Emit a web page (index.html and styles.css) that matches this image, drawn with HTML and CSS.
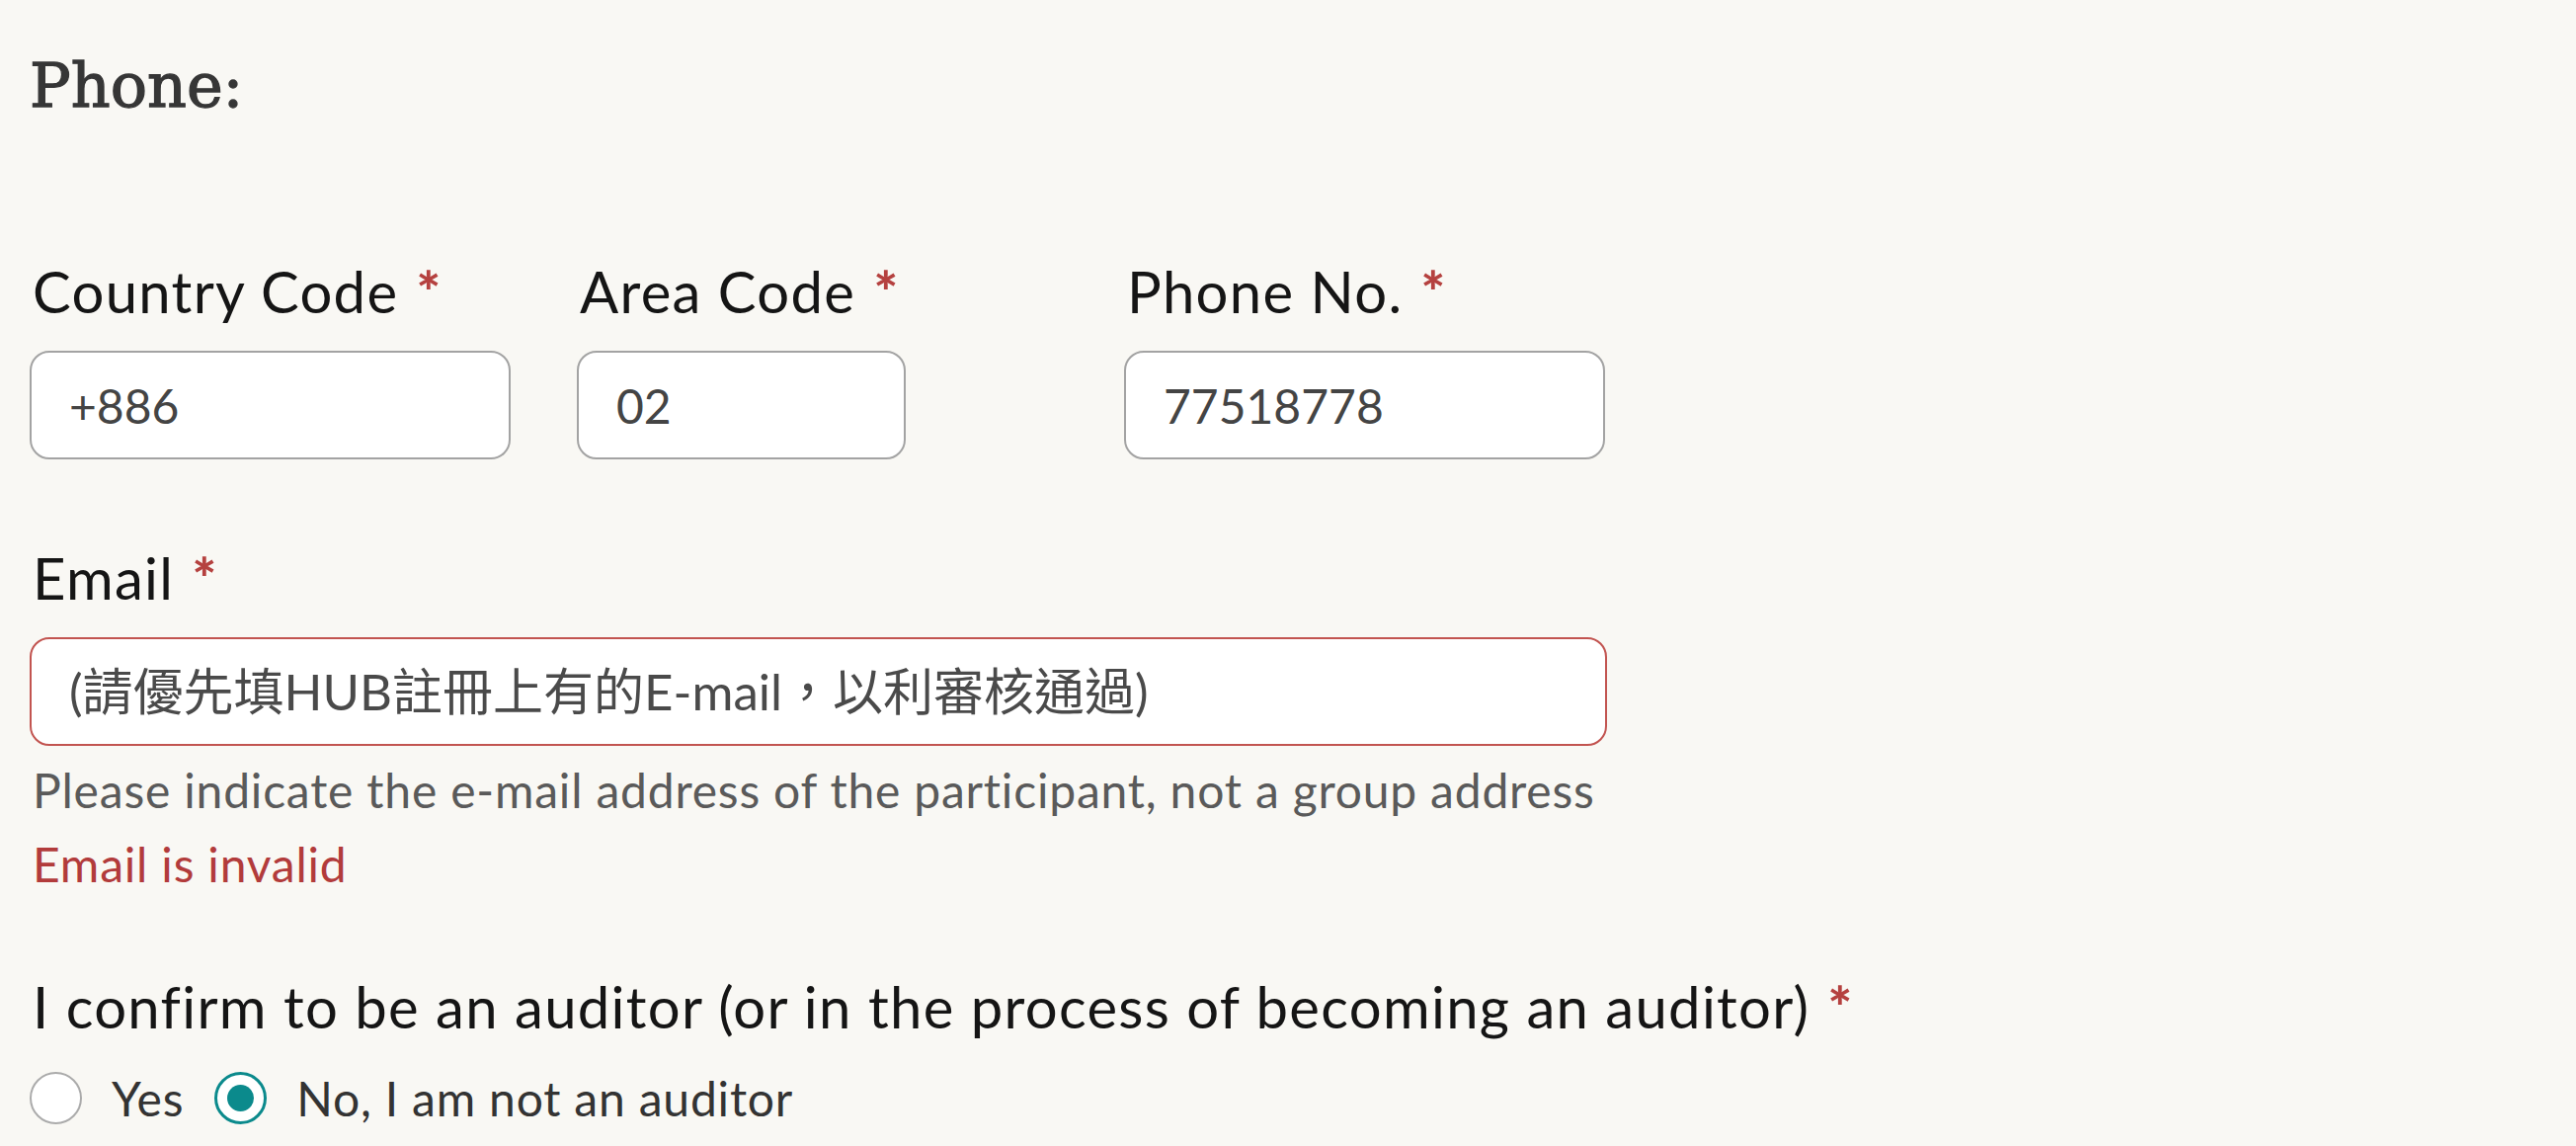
FILE: index.html
```html
<!DOCTYPE html>
<html lang="en">
<head>
<meta charset="utf-8">
<title>Phone</title>
<link rel="stylesheet" href="styles.css">
</head>
<body>
<form class="form">
  <h3 class="section-title">Phone:</h3>

  <div class="phone-grid">
    <div class="field">
      <label class="field-label" for="cc">Country Code <span class="req">*</span></label>
      <input class="text-input" id="cc" type="text" value="+886">
    </div>
    <div class="field">
      <label class="field-label" for="ac">Area Code <span class="req">*</span></label>
      <input class="text-input narrow" id="ac" type="text" value="02">
    </div>
    <div class="field">
      <label class="field-label" for="pn">Phone No. <span class="req">*</span></label>
      <input class="text-input" id="pn" type="text" value="77518778">
    </div>
  </div>

  <div class="field email-field">
    <label class="field-label" for="em">Email <span class="req">*</span></label>
    <input class="text-input wide invalid" id="em" type="text" placeholder="(請優先填HUB註冊上有的E-mail，以利審核通過)">
    <p class="help">Please indicate the e-mail address of the participant, not a group address</p>
    <p class="help error">Email is invalid</p>
  </div>

  <div class="field confirm-field">
    <p class="field-label confirm">I confirm to be an auditor (or in the process of becoming an auditor) <span class="req">*</span></p>
    <div class="radios">
      <label class="radio-option"><input type="radio" name="auditor" class="radio"><span>Yes</span></label>
      <label class="radio-option"><input type="radio" name="auditor" class="radio" checked><span>No, I am not an auditor</span></label>
    </div>
  </div>
</form>
</body>
</html>
```

FILE: styles.css
```css
html, body {
  margin: 0;
  padding: 0;
  background: #f9f8f4;
}

body {
  font-family: Lato, "Noto Sans CJK TC", sans-serif;
  color: #151515;
}

.form {
  padding: 51px 0 0 30px;
}

.section-title {
  margin: 0;
  font-family: "DejaVu Serif", serif;
  font-weight: normal;
  font-size: 62px;
  line-height: 72px;
  color: #363636;
  -webkit-text-stroke: 1.3px #363636;
}

.phone-grid {
  display: grid;
  grid-template-columns: 487px 487px 487px;
  column-gap: 67px;
  margin-top: 142px;
}

.field-label {
  display: block;
  margin: 0 0 30px 0;
  padding-left: 3px;
  font-size: 58px;
  line-height: 60px;
  letter-spacing: 1.3px;
  color: #151515;
}

.req {
  color: #b5413f;
  font-weight: 900;
  margin-left: 2px;
}

.text-input {
  box-sizing: border-box;
  display: block;
  width: 487px;
  height: 110px;
  margin: 0;
  padding: 0 38px;
  border: 2px solid #a3a3a3;
  border-radius: 20px;
  background: #ffffff;
  font-family: Lato, "Noto Sans CJK TC", sans-serif;
  font-size: 48px;
  color: #444444;
  outline: none;
}

.text-input.narrow {
  width: 333px;
}

.text-input.wide {
  width: 1597px;
}

.text-input.invalid {
  border-color: #c25450;
}

.text-input::placeholder {
  color: #4a4a4a;
  opacity: 1;
  font-size: 51px;
}

.email-field {
  margin-top: 90px;
}

.help {
  margin: 15px 0 0 0;
  padding-left: 3px;
  font-size: 48px;
  line-height: 60px;
  letter-spacing: 0.8px;
  color: #5a5a5a;
}

.help.error {
  color: #b23b3b;
}

.confirm-field {
  margin-top: 84px;
}

.confirm {
  margin-bottom: 36px;
}

.radios {
  display: flex;
  align-items: center;
  gap: 31px;
}

.radio-option {
  display: flex;
  align-items: center;
  gap: 30px;
  font-size: 48px;
  line-height: 52px;
  letter-spacing: 0.8px;
  color: #333333;
}

.radio {
  appearance: none;
  -webkit-appearance: none;
  box-sizing: border-box;
  width: 53px;
  height: 53px;
  margin: 0;
  border: 2px solid #ababab;
  border-radius: 50%;
  background: #ffffff;
  display: grid;
  place-items: center;
}

.radio:checked {
  border: 3px solid #0b8a8c;
}

.radio:checked::after {
  content: "";
  width: 27px;
  height: 27px;
  border-radius: 50%;
  background: #0b8a8c;
}
```
